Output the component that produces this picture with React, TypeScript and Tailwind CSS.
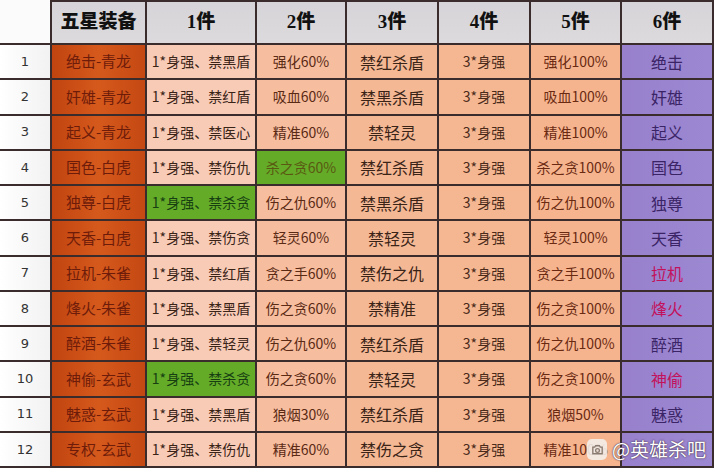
import React from "react";

type Cell = { t: string; green?: boolean; red?: boolean };

const rows: { name: string; c: Cell[]; six: Cell }[] = [
  { name: "绝击-青龙", c: [{ t: "1*身强、禁黑盾" }, { t: "强化60%" }, { t: "禁红杀盾" }, { t: "3*身强" }, { t: "强化100%" }], six: { t: "绝击" } },
  { name: "奸雄-青龙", c: [{ t: "1*身强、禁红盾" }, { t: "吸血60%" }, { t: "禁黑杀盾" }, { t: "3*身强" }, { t: "吸血100%" }], six: { t: "奸雄" } },
  { name: "起义-青龙", c: [{ t: "1*身强、禁医心" }, { t: "精准60%" }, { t: "禁轻灵" }, { t: "3*身强" }, { t: "精准100%" }], six: { t: "起义" } },
  { name: "国色-白虎", c: [{ t: "1*身强、禁伤仇" }, { t: "杀之贪60%", green: true }, { t: "禁红杀盾" }, { t: "3*身强" }, { t: "杀之贪100%" }], six: { t: "国色" } },
  { name: "独尊-白虎", c: [{ t: "1*身强、禁杀贪", green: true }, { t: "伤之仇60%" }, { t: "禁黑杀盾" }, { t: "3*身强" }, { t: "伤之仇100%" }], six: { t: "独尊" } },
  { name: "天香-白虎", c: [{ t: "1*身强、禁伤贪" }, { t: "轻灵60%" }, { t: "禁轻灵" }, { t: "3*身强" }, { t: "轻灵100%" }], six: { t: "天香" } },
  { name: "拉机-朱雀", c: [{ t: "1*身强、禁红盾" }, { t: "贪之手60%" }, { t: "禁伤之仇" }, { t: "3*身强" }, { t: "贪之手100%" }], six: { t: "拉机", red: true } },
  { name: "烽火-朱雀", c: [{ t: "1*身强、禁黑盾" }, { t: "伤之贪60%" }, { t: "禁精准" }, { t: "3*身强" }, { t: "伤之贪100%" }], six: { t: "烽火", red: true } },
  { name: "醉酒-朱雀", c: [{ t: "1*身强、禁轻灵" }, { t: "伤之仇60%" }, { t: "禁红杀盾" }, { t: "3*身强" }, { t: "伤之仇100%" }], six: { t: "醉酒" } },
  { name: "神偷-玄武", c: [{ t: "1*身强、禁杀贪", green: true }, { t: "伤之贪60%" }, { t: "禁轻灵" }, { t: "3*身强" }, { t: "伤之贪100%" }], six: { t: "神偷", red: true } },
  { name: "魅惑-玄武", c: [{ t: "1*身强、禁黑盾" }, { t: "狼烟30%" }, { t: "禁红杀盾" }, { t: "3*身强" }, { t: "狼烟50%" }], six: { t: "魅惑" } },
  { name: "专权-玄武", c: [{ t: "1*身强、禁伤仇" }, { t: "精准60%" }, { t: "禁伤之贪" }, { t: "3*身强" }, { t: "精准100%" }], six: { t: "" } },
];

const colBg = ["bg-[#f8cbb6]", "bg-[#f6bd9f]", "bg-[#f5b894]", "bg-[#f4b792]", "bg-[#f6b48e]"];
const colText = [
  "text-[#3a2418] text-[14px]",
  "text-[#5a2a14] text-[14px]",
  "text-[#3a2418] text-[16px]",
  "text-[#4a2a1a] text-[14px]",
  "text-[#6a2a12] text-[14px]",
];

const headers = ["五星装备", "1件", "2件", "3件", "4件", "5件", "6件"];

const border = "border-r-2 border-b-2 border-[#3a2c2c]";

export default function App() {
  return (
    <div
      className="relative w-[714px] h-[471px] overflow-hidden bg-white"
      style={{ fontFamily: '"Noto Sans CJK SC", "Noto Sans", sans-serif' }}
    >
      <div className="grid grid-cols-[52px_95px_110px_90px_92px_92px_91px_92px] grid-rows-[45px_repeat(12,35.25px)]">
        <div className="bg-[#fbfbfb] border-r-2 border-b-2 border-[#3a2c2c]" />
        {headers.map((h) => (
          <div
            key={h}
            className={`flex items-center justify-center bg-linear-to-b from-[#d6d4d8] to-[#dcdadc] border-t-2 ${border} text-[19px] font-black text-[#111]`}
            style={{ fontFamily: '"Liberation Serif", "Noto Sans CJK SC", serif' }}
          >
            {h}
          </div>
        ))}
        {rows.map((r, i) => (
          <React.Fragment key={i}>
            <div
              className={`flex items-center justify-center bg-linear-to-r from-[#ffffff] to-[#f2f2f2] ${border} text-[13px] text-[#333]`}
              style={{ fontFamily: '"DejaVu Sans", sans-serif' }}
            >
              {i + 1}
            </div>
            <div
              className={`flex items-center justify-center bg-linear-to-r from-[#c0440f] via-[#d6591c] to-[#c44812] ${border} text-[15px] text-[#6e1c0a]`}
            >
              {r.name}
            </div>
            {r.c.map((c, j) => (
              <div
                key={j}
                className={`flex items-center justify-center whitespace-nowrap ${border} ${
                  c.green ? "bg-[#64ac28]" : colBg[j]
                } ${c.green ? (j === 0 ? "text-[#173f12] text-[14px]" : "text-[#5a5812] text-[14px]") : colText[j]}`}
              >
                {c.t}
              </div>
            ))}
            <div
              className={`flex items-center justify-center bg-linear-to-r from-[#9880cc] to-[#9c88d2] ${border} text-[16px] ${
                r.six.red ? "text-[#c3125c]" : "text-[#3a2466]"
              }`}
            >
              {r.six.t}
            </div>
          </React.Fragment>
        ))}
      </div>
      <div className="absolute left-[587px] top-[439px] w-[20px] h-[21px] rounded-[5px] bg-[#f3eeea]/90 flex items-center justify-center">
        <svg width="15" height="15" viewBox="0 0 16 16" fill="none" stroke="#8a7a70" strokeWidth="1.4">
          <path d="M3 5.5 h2 l1-1.5 h4 l1 1.5 h2 v7 h-10 z" />
          <circle cx="8" cy="9" r="2" />
        </svg>
      </div>
      <div
        className="absolute left-[612px] top-[436px] text-[19px] text-white leading-[26px] whitespace-nowrap"
        style={{ textShadow: "0 0 2px rgba(60,40,60,0.8), 0 0 1px rgba(60,40,60,0.9)" }}
      >
        @英雄杀吧
      </div>
    </div>
  );
}
